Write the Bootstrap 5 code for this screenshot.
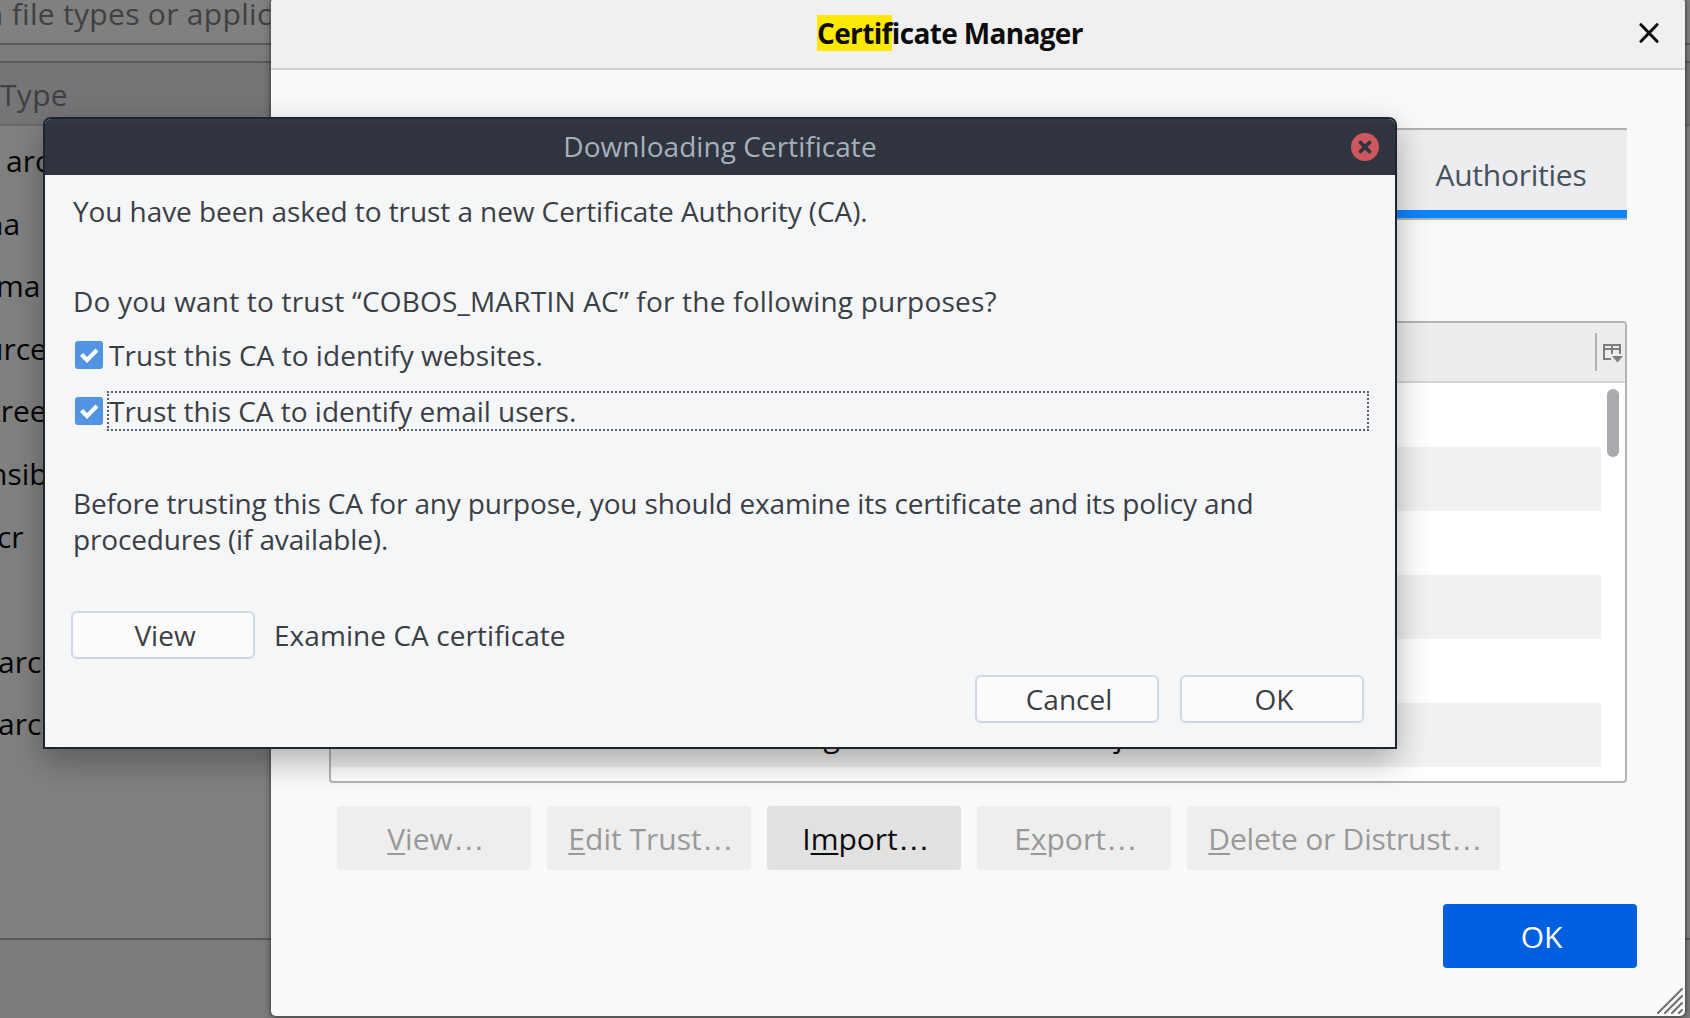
<!DOCTYPE html>
<html lang="en">
<head>
<meta charset="utf-8">
<meta name="viewport" content="width=device-width, initial-scale=1">
<title>Certificate Manager</title>
<link href="https://cdn.jsdelivr.net/npm/bootstrap@5.3.0/dist/css/bootstrap.min.css" rel="stylesheet">
<style>
  body { font-family: "Open Sans", "Noto Sans", sans-serif; font-size: 30px; background: #7c7c7c; color: #0c0c0d; }
  .desk { width: 1690px; height: 1018px; }

  /* dimmed preferences page */
  .search-box { height: 45px; line-height: 27px; background: #808080; border-bottom: 2px solid #5a5a5a; color: #404040; text-indent: -23px; letter-spacing: .3px; }
  .type-list { height: 879px; margin-top: 16px; background: #808080; border-top: 2px solid #5a5a5a; border-bottom: 2px solid #5a5a5a; color: #050506; }
  .type-head { height: 63px; line-height: 63px; background: #757577; border-bottom: 2px solid #69696b; color: #404043; margin-bottom: 3px; letter-spacing: .3px; }
  .type-row { height: 62.6px; line-height: 63px; }

  /* certificate manager */
  .manager { left: 271px; top: -2px; width: 1414px; height: 1018px; background: #f9f9f9; border-radius: 5px; box-shadow: 0 0 0 2px rgba(0,0,0,.13), 0 2px 10px rgba(0,0,0,.35); }
  .manager-head { height: 72px; background: #f0f0f0; border-bottom: 2px solid #d4d4d8; border-radius: 5px 5px 0 0; }
  .manager-title { font-size: 28px; font-weight: 700; line-height: 36px; letter-spacing: -.65px; margin-left: 546px; }
  .hit { background: #ffe900; display: inline-block; height: 36px; }
  .head-x { margin-right: 26px; }
  .manager-body { padding: 58px 58px 0; }
  .cert-tab { width: 234px; height: 92px; background: #ededf0; border-top: 2px solid #b1b1b3; border-bottom: 2px solid #b1b1b3; color: #45525e; }
  .cert-tab .tab-text { height: 80px; line-height: 90px; letter-spacing: -.25px; padding-left: 2px; }
  .cert-tab .tab-bar { height: 8px; background: #0a84ff; }
  .tree { height: 462px; margin-top: 101px; background: #fff; border: 2px solid #b4b4b5; border-radius: 4px; overflow: hidden; }
  .tree-head { height: 60px; background: #ededf0; border-bottom: 2px solid #d4d4d6; }
  .picker { width: 30px; height: 38px; border-left: 2px solid #b1b1b3; padding: 11px 0 0 6px; }
  .tree-rows { width: 1270px; }
  .tree-row { height: 64px; line-height: 65px; }
  .tree-row:nth-child(even) { background: #f1f1f1; }
  .tree-row .cert-name { width: 621px; padding-left: 69px; }
  .scroll-thumb { width: 12px; height: 68px; border-radius: 6px; background: #a9aaae; margin: 6px 6px 0 0; }
  .btn-row { padding: 23px 0 0 8px; gap: 16px; }
  .btn-ff { --bs-btn-font-size: 30px; --bs-btn-line-height: 66px; --bs-btn-padding-y: 0; --bs-btn-padding-x: 0; --bs-btn-border-width: 0; --bs-btn-border-radius: 4px; height: 64px; background: #e1e1e1; color: #0c0c0d; font-family: inherit; white-space: nowrap; padding-left: 4px; }
  .btn-ff.disabled { background: #eee; color: #999; opacity: 1; }
  .btn-ff u { text-decoration-thickness: 2px; text-underline-offset: 3px; text-decoration-skip-ink: none; }
  .dots { font-family: "Liberation Sans", sans-serif; font-size: 32px; line-height: 0; }
  .w-s { width: 194px; } .w-m { width: 204px; } .w-l { width: 313px; letter-spacing: -.22px; }
  .btn-go, .btn-go:hover { background: #0060df; color: #fff; margin: 34px 48px 0 0; padding-left: 3px; }
  .grip { right: 2px; bottom: 2px; }

  /* certificate download prompt */
  .prompt { left: 43px; top: 117px; width: 1354px; height: 632px; background: #f5f6f8; border: 2px solid #20242d; border-radius: 8px 8px 0 0; box-shadow: 0 12px 32px rgba(0,0,0,.3); color: #3b3e45; font-size: 28px; }
  .prompt-head { height: 56px; background: #2f343f; border-top: 2px solid #343945; border-radius: 6px 6px 0 0; color: #a6b1be; letter-spacing: .04px; line-height: 51px; }
  .prompt-x { right: 16px; top: 12px; }
  .prompt-body { padding: 18px 26px 0; line-height: 36px; }
  .para { padding-left: 2px; white-space: nowrap; }
  .trust-row { height: 40px; padding-left: 4px; margin-top: 16px; }
  .tick { width: 28px; height: 28px; flex: none; margin-right: 4px; }
  .trust-label { height: 40px; line-height: 40px; padding-left: 2px; letter-spacing: .04px; }
  .has-focus { width: 1262px; line-height: 36px; padding-left: 0; border: 2px dotted #5c5f66; letter-spacing: -.02px; }
  .p-intro { letter-spacing: -.08px; }
  .p-ask { letter-spacing: .2px; margin-top: 54px; }
  .p-warn { letter-spacing: -.15px; margin-top: 54px; }
  .view-row { margin-top: 54px; }
  .view-row span { padding-left: 19px; letter-spacing: .06px; }
  .end-row { margin-top: 16px; gap: 21px; padding-right: 5px; }
  .btn-gtk { --bs-btn-font-size: 28px; --bs-btn-line-height: 44px; --bs-btn-padding-y: 0; --bs-btn-padding-x: 0; --bs-btn-border-radius: 6px; width: 184px; height: 48px; background: #fbfbfc; border: 2px solid #cfd6e6; color: #3b3e45; font-family: inherit; padding-left: 4px; }
</style>
</head>
<body>
<div class="desk position-relative overflow-hidden">
  <main>
    <div class="search-box text-nowrap">in file types or applications</div>
    <div class="type-list">
      <div class="type-head">Type</div>
      <div class="type-row" style="text-indent:6px">archive</div>
      <div class="type-row" style="text-indent:-15px">na</div>
      <div class="type-row" style="text-indent:-4px">ma</div>
      <div class="type-row" style="text-indent:-15px">urce</div>
      <div class="type-row" style="text-indent:-10px">tree</div>
      <div class="type-row" style="text-indent:-11px">nsible</div>
      <div class="type-row" style="text-indent:-3px">cr</div>
      <div class="type-row"></div>
      <div class="type-row" style="text-indent:-2px">archive</div>
      <div class="type-row" style="text-indent:-2px">archive</div>
    </div>
  </main>

  <section class="manager position-absolute">
    <header class="manager-head d-flex align-items-center justify-content-between">
      <div class="manager-title"><span class="hit">Certif</span>icate Manager</div>
      <svg class="head-x" width="20" height="20" viewBox="0 0 20 20" fill="none" stroke="#0c0c0d" stroke-width="3" stroke-linecap="round"><path d="M2 1.700L18 18.300M18 1.700L2 18.300"/></svg>
    </header>
    <div class="manager-body">
      <div class="d-flex justify-content-end">
        <div class="cert-tab text-center"><div class="tab-text">Authorities</div><div class="tab-bar"></div></div>
      </div>
      <div class="tree">
        <div class="tree-head d-flex justify-content-end align-items-center">
          <div class="picker">
            <svg class="d-block" width="21" height="20" viewBox="0 0 21 20" fill="#7e7e80"><path d="M0 0h18v10h-2V6h-6v4H8V6H2v8h6v2H0zM2 2v2h6V2zM10 2v2h6V2z" fill-rule="evenodd"/><path d="M9 12h11l-5.500 6.500z"/></svg>
          </div>
        </div>
        <div class="d-flex justify-content-between">
          <div class="tree-rows">
            <div class="tree-row"></div>
            <div class="tree-row"></div>
            <div class="tree-row"></div>
            <div class="tree-row"></div>
            <div class="tree-row"></div>
            <div class="tree-row d-flex text-nowrap"><span class="cert-name">Camerfirma Global Chambersign Root</span><span class="ps-4">Builtin Object Token</span></div>
          </div>
          <div class="scroll-thumb"></div>
        </div>
      </div>
      <div class="btn-row d-flex">
        <button class="btn btn-ff w-s disabled"><u>V</u>iew<span class="dots">…</span></button>
        <button class="btn btn-ff w-m disabled"><u>E</u>dit Trust<span class="dots">…</span></button>
        <button class="btn btn-ff w-s">I<u>m</u>port<span class="dots">…</span></button>
        <button class="btn btn-ff w-s disabled">E<u>x</u>port<span class="dots">…</span></button>
        <button class="btn btn-ff w-l disabled"><u>D</u>elete or Distrust<span class="dots">…</span></button>
      </div>
    </div>
    <div class="d-flex justify-content-end"><button class="btn btn-ff btn-go w-s">OK</button></div>
    <svg class="grip position-absolute" width="26" height="26" viewBox="0 0 26 26" stroke="#6e6e70" stroke-width="2" stroke-linecap="round"><path d="M1 25L25 1M8 25L25 8M15 25L25 15M22 25L25 22"/></svg>
  </section>

  <section class="prompt position-absolute">
    <header class="prompt-head text-center position-relative">Downloading Certificate
      <svg class="prompt-x position-absolute" width="28" height="28" viewBox="0 0 28 28"><circle cx="14" cy="14" r="14" fill="#cc575d"/><path d="M9.500 9.500L18.500 18.500M18.500 9.500L9.500 18.500" stroke="#2f343f" stroke-width="3.800" stroke-linecap="round"/></svg>
    </header>
    <div class="prompt-body">
      <div class="para p-intro">You have been asked to trust a new Certificate Authority (CA).</div>
      <div class="para p-ask">Do you want to trust “COBOS_MARTIN AC” for the following purposes?</div>
      <div class="trust-row d-flex align-items-center">
        <svg class="tick" viewBox="0 0 28 28"><rect width="28" height="28" rx="3" fill="#5294e2"/><path d="M6.500 13.500L12 19L22 9" fill="none" stroke="#fff" stroke-width="4.200"/></svg>
        <div class="trust-label">Trust this CA to identify websites.</div>
      </div>
      <div class="trust-row d-flex align-items-center">
        <svg class="tick" viewBox="0 0 28 28"><rect width="28" height="28" rx="3" fill="#5294e2"/><path d="M6.500 13.500L12 19L22 9" fill="none" stroke="#fff" stroke-width="4.200"/></svg>
        <div class="trust-label has-focus">Trust this CA to identify email users.</div>
      </div>
      <div class="para p-warn">Before trusting this CA for any purpose, you should examine its certificate and its policy and<br>procedures (if available).</div>
      <div class="view-row d-flex align-items-center">
        <button class="btn btn-gtk">View</button><span>Examine CA certificate</span>
      </div>
      <div class="end-row d-flex justify-content-end">
        <button class="btn btn-gtk">Cancel</button><button class="btn btn-gtk">OK</button>
      </div>
    </div>
  </section>
</div>
<script src="https://cdn.jsdelivr.net/npm/bootstrap@5.3.0/dist/js/bootstrap.bundle.min.js"></script>
</body>
</html>
